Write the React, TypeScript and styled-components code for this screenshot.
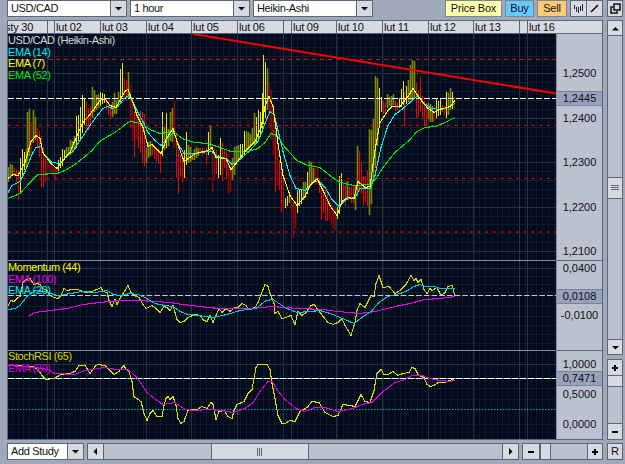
import React, { FunctionComponent } from 'react';
import styled, { createGlobalStyle } from 'styled-components';

const colors = {
  frame: '#a0a9ba',
  panel: '#bcc1cf',
  button: '#d8dae1',
  line: '#5d6678',
  yellow: '#ffff00',
  olive: '#858500',
  red: '#f00000',
  maroon: '#850808',
  cyan: '#00f0f0',
  magenta: '#f000f0',
  green: '#00e800',
};

const GlobalStyle = createGlobalStyle`
  body {
    margin: 0;
    background: ${colors.frame};
    font: 11px/15px 'Liberation Sans', Arial, sans-serif;
    color: #101014;
    overflow: hidden;
  }

  * {
    box-sizing: border-box;
  }
`;

const Window = styled.div`
  width: 625px;
  height: 464px;
  padding: 0 2px 3px 7px;
  display: grid;
  grid-template-columns: 596px 16px;
  grid-template-rows: 17px 420px 17px;
  column-gap: 4px;
  row-gap: 3px;
  background: ${colors.frame};
`;

const Toolbar = styled.div`
  display: flex;
  align-items: stretch;
`;

const Select = styled.div<{ width: number }>`
  width: ${({ width }) => width}px;
  height: 17px;
  margin-right: 3px;
  display: flex;
  border: 1px solid ${colors.line};
  background: #fff;
`;

const SelectLabel = styled.span`
  flex: 1;
  padding-left: 3px;
  letter-spacing: -0.35px;
  white-space: nowrap;
`;

const SelectArrow = styled.span`
  width: 16px;
  display: flex;
  align-items: center;
  justify-content: center;
  border-left: 1px solid ${colors.line};
  background: ${colors.button};
`;

const Spacer = styled.div`
  flex: 1;
`;

const Action = styled.button<{ tint: string; width: number }>`
  width: ${({ width }) => width}px;
  height: 17px;
  margin: 0 3px 0 0;
  padding: 0;
  border: 1px solid #7d8492;
  background: ${({ tint }) => tint};
  font: inherit;
  letter-spacing: -0.2px;
  color: inherit;
  white-space: nowrap;
`;

const IconCell = styled.div<{ width: number; joined?: boolean }>`
  width: ${({ width }) => width}px;
  height: 17px;
  display: flex;
  align-items: center;
  justify-content: center;
  border: 1px solid ${colors.line};
  border-left-width: ${({ joined }) => (joined ? 0 : 1)}px;
  background: ${colors.button};
`;

const ChartPanel = styled.div`
  border: 1px solid ${colors.line};
  display: grid;
  grid-template-columns: 548px 46px;
  grid-template-rows: 13px 405px;
`;

const TimeAxis = styled.div`
  display: flex;
  background: ${colors.button};
  border-bottom: 1px solid ${colors.line};
  overflow: hidden;
`;

const Day = styled.span<{ width: number }>`
  flex: none;
  width: ${({ width }) => width}px;
  padding-left: 1px;
  line-height: 13px;
  letter-spacing: -0.2px;
  white-space: nowrap;
  overflow: hidden;
  border-right: 1px solid ${colors.line};

  /* the oldest day is scrolled partly out of view */
  &:first-child {
    padding-left: 0;
    text-indent: -3px;
  }
`;

const AxisCorner = styled.div`
  border-bottom: 1px solid ${colors.line};
  background: ${colors.button};
`;

const Plot = styled.div`
  position: relative;
  background: #020b1c;
`;

const Legend = styled.div<{ top: number }>`
  position: absolute;
  left: 0;
  top: ${({ top }) => top}px;
  line-height: 11.5px;
  letter-spacing: -0.42px;
  white-space: nowrap;
`;

const LegendRow = styled.div<{ color: string }>`
  color: ${({ color }) => color};
`;

const PriceAxis = styled.div`
  display: grid;
  grid-template-rows: 227px 90px 88px;
  background: ${colors.panel};
`;

const AxisPane = styled.div`
  position: relative;
  overflow: hidden;
  border-left: 1px solid #8a92a4;
  border-bottom: 1px solid ${colors.line};

  &:last-child {
    border-bottom: 0;
  }
`;

const Tick = styled.span<{ top: number; current?: boolean }>`
  position: absolute;
  top: ${({ top }) => top}px;
  left: 0;
  width: 45px;
  height: 15px;
  line-height: 13px;
  text-align: center;
  background: ${({ current }) => (current ? '#97a2bd' : 'none')};
  border: solid #7a839a;
  border-width: ${({ current }) => (current ? '1px 0' : 0)};
`;

const SideBar = styled.div`
  display: flex;
  flex-direction: column;
  gap: 4px;
`;

const Track = styled.div<{ size: number; vertical?: boolean }>`
  flex: none;
  ${({ vertical }) => (vertical ? 'height' : 'width')}: ${({ size }) => size}px;
  display: flex;
  flex-direction: ${({ vertical }) => (vertical ? 'column' : 'row')};
  border: 1px solid ${colors.line};
  background: ${colors.panel};
`;

const Gap = styled.div<{ size: number }>`
  flex: 0 0 ${({ size }) => size}px;
`;

const Handle = styled.div<{ size: number; sides: string }>`
  flex: 0 0 ${({ size }) => size}px;
  display: flex;
  align-items: center;
  justify-content: center;
  background: ${colors.button};
  border: solid ${colors.line};
  border-width: ${({ sides }) => sides};
`;

const BottomBar = styled.div`
  display: flex;
`;

type Point = [number, number];
type Kind = 'Y' | 'y' | 'R' | 'r';

const kinds: Record<Kind, string> = {
  Y: '#e8e800',
  y: colors.olive,
  R: colors.red,
  r: colors.maroon,
};

const days: [string, number][] = [
  ['sty 30', 40], ['', 7], ['lut 02', 46], ['lut 03', 46], ['lut 04', 45], ['lut 05', 46],
  ['lut 06', 46], ['', 8], ['lut 09', 45], ['lut 10', 46], ['lut 11', 46], ['lut 12', 45],
  ['lut 13', 46], ['', 8], ['lut 16', 30],
];

// x, high, low, kind
const candles = `
8 167 182 y,10 164 178 y,12 165 176 y,14 168 176 R,16 169 182 R,18 171 199 R,20 158 194 Y,22 149 176 Y,24 152 170 Y,
26 149 167 y,27 112 161 y,29 109 156 y,31 122 153 r,33 110 143 y,35 117 140 y,37 128 148 R,39 131 157 R,41 136 187 R,
43 147 187 R,45 157 182 R,47 160 170 r,49 165 172 r,51 165 174 r,53 165 177 r,55 167 181 r,57 165 173 r,58 160 171 Y,
60 157 168 Y,62 149 166 Y,64 150 160 Y,66 147 158 y,68 147 156 y,70 140 155 y,72 141 153 y,74 136 150 y,76 116 148 Y,
78 115 141 Y,80 107 139 Y,82 95 133 Y,84 99 125 Y,86 102 132 R,88 108 131 R,90 106 125 R,92 87 118 y,94 90 112 y,
96 95 110 y,98 94 108 y,100 92 106 Y,102 93 104 Y,104 94 103 Y,106 99 110 R,108 102 115 R,110 106 119 R,112 102 117 y,
114 93 114 y,116 100 114 y,118 92 106 y,120 69 102 Y,122 63 97 Y,124 78 99 R,126 80 101 R,128 72 99 y,130 85 128 r,
132 100 141 r,134 112 157 R,136 109 140 r,138 112 148 R,140 111 153 R,142 112 163 R,144 114 166 R,146 148 163 y,
148 142 158 y,150 141 156 y,152 143 155 R,154 147 159 R,156 149 161 R,158 148 164 R,160 152 173 R,162 112 156 Y,
164 127 150 y,166 113 148 Y,168 129 146 y,170 112 141 y,172 108 142 y,174 101 148 r,176 135 178 R,178 150 194 R,
180 155 177 R,182 153 182 R,184 150 178 Y,186 132 165 Y,188 145 163 y,190 147 162 y,192 154 160 y,194 149 160 y,
196 147 158 y,198 148 156 y,200 148 154 R,202 147 156 R,204 150 154 R,206 147 165 R,208 132 155 Y,210 125 152 y,
212 146 192 r,214 147 180 r,216 150 174 R,218 155 179 Y,220 138 175 Y,222 143 181 R,224 150 168 R,226 151 179 R,
228 155 194 r,230 160 192 r,232 158 180 y,234 147 175 y,236 146 165 y,238 145 162 y,240 144 160 Y,242 144 158 Y,
244 131 156 Y,246 131 152 y,248 132 150 y,250 134 147 y,252 128 145 y,254 113 146 y,256 117 143 Y,258 110 140 Y,
260 112 134 Y,262 93 132 Y,263 55 124 Y,265 62 118 Y,267 68 110 y,269 83 128 r,271 90 140 r,273 104 155 r,275 120 192 R,
277 138 186 r,279 160 190 R,281 171 212 R,283 178 209 R,285 198 208 Y,287 196 206 Y,289 195 203 y,291 195 213 r,
293 199 238 r,295 201 229 r,297 190 213 Y,299 190 206 Y,301 189 204 Y,303 182 200 y,305 182 198 y,307 172 194 Y,
309 161 188 y,311 162 185 y,313 168 182 y,315 168 185 r,317 168 184 r,319 178 193 R,321 182 220 R,323 186 213 R,
325 190 221 R,327 194 221 R,329 198 220 r,331 204 224 r,333 206 229 r,335 208 230 r,337 207 219 Y,339 176 214 Y,
341 173 202 Y,343 184 201 R,345 185 206 R,347 181 200 y,349 187 199 R,351 187 203 R,353 185 203 R,355 185 210 y,
357 146 196 y,359 151 192 R,361 162 194 R,363 176 206 R,365 176 202 R,367 170 206 R,369 129 215 y,371 130 204 y,
373 119 178 y,375 76 168 y,377 78 146 y,379 88 124 Y,381 97 112 Y,383 101 114 R,385 102 113 R,387 94 108 y,389 97 106 y,
391 96 106 y,393 94 105 y,395 101 111 R,397 102 111 R,399 98 108 Y,401 89 107 Y,403 81 105 Y,404 92 126 R,406 86 104 Y,
408 80 102 y,410 65 100 y,412 60 98 y,414 61 98 y,416 83 118 R,418 90 117 R,420 77 111 R,422 96 119 R,424 101 126 R,
426 103 126 R,428 103 119 y,430 104 122 y,432 106 122 y,434 105 121 r,436 98 118 Y,438 101 116 Y,440 98 115 Y,
442 105 112 R,444 106 116 R,446 92 118 Y,448 93 115 y,450 88 110 y,452 92 109 Y,454 97 108 r`
  .split(',')
  .map(row => row.trim().split(' '));

const ema52: Point[] = [
  [8, 198], [20, 193], [30, 182], [38, 174], [57, 173], [65, 170], [75, 164], [85, 156], [92, 150], [100, 141],
  [106, 137], [115, 132], [124, 125], [130, 121], [137, 122], [144, 125], [152, 130], [160, 133], [173, 131],
  [184, 139], [195, 142], [208, 143], [220, 147], [231, 151], [248, 151], [258, 148], [265, 142], [271, 133],
  [277, 135], [285, 147], [297, 160], [308, 165], [320, 167], [330, 175], [338, 181], [348, 184], [355, 185],
  [370, 184], [376, 178], [383, 167], [395, 152], [410, 139], [417, 131], [425, 127], [435, 126], [443, 123], [455, 117],
];

const ema14: Point[] = [
  [8, 192], [12, 185], [20, 181], [25, 171], [32, 154], [36, 147], [41, 146], [44, 154], [52, 162], [60, 163],
  [67, 155], [73, 151], [78, 143], [86, 131], [95, 118], [103, 108], [107, 106], [113, 108], [118, 106], [124, 98],
  [129, 95], [133, 102], [138, 112], [143, 121], [148, 132], [155, 140], [161, 145], [168, 137], [174, 132],
  [178, 143], [184, 153], [195, 153], [208, 151], [212, 151], [217, 156], [226, 158], [232, 164], [240, 159],
  [250, 150], [258, 141], [265, 123], [270, 111], [274, 114], [278, 130], [284, 155], [290, 175], [296, 188],
  [305, 190], [312, 183], [318, 180], [325, 187], [332, 199], [339, 206], [346, 199], [355, 197], [360, 188],
  [370, 188], [375, 175], [381, 147], [388, 125], [395, 114], [403, 108], [411, 101], [418, 95], [424, 103],
  [432, 108], [441, 109], [450, 106], [455, 103],
];

const ema7: Point[] = [
  [8, 178], [13, 174], [18, 175], [25, 162], [31, 141], [36, 135], [40, 138], [43, 152], [50, 162], [57, 168],
  [63, 160], [70, 152], [77, 135], [83, 122], [90, 114], [95, 107], [100, 100], [105, 98], [110, 105], [116, 107],
  [121, 98], [125, 91], [128, 89], [133, 102], [137, 115], [143, 127], [148, 146], [152, 144], [156, 148],
  [161, 153], [167, 137], [173, 128], [178, 144], [184, 161], [190, 157], [195, 153], [208, 150], [212, 147],
  [216, 157], [226, 158], [231, 169], [236, 163], [245, 151], [255, 141], [261, 127], [265, 106], [269, 96],
  [273, 106], [278, 143], [283, 175], [290, 195], [297, 205], [305, 196], [310, 185], [317, 178], [323, 190],
  [330, 205], [337, 215], [342, 201], [348, 197], [354, 198], [358, 181], [365, 187], [370, 186], [375, 150],
  [380, 122], [388, 110], [392, 106], [400, 106], [408, 96], [413, 88], [417, 94], [422, 101], [428, 108],
  [434, 112], [440, 109], [450, 106], [455, 100],
];

const momentum: Point[] = [
  [8, 305], [11, 300], [14, 301], [17, 298], [20, 296], [23, 282], [26, 279], [30, 278], [34, 284], [37, 283],
  [40, 284], [43, 288], [47, 290], [50, 295], [54, 297], [58, 298], [61, 295], [64, 288], [67, 290], [72, 289],
  [78, 289], [85, 292], [92, 291], [97, 289], [101, 287], [103, 291], [107, 292], [109, 300], [112, 306],
  [115, 299], [117, 304], [121, 296], [125, 290], [128, 285], [131, 292], [134, 295], [139, 297], [143, 304],
  [146, 308], [152, 305], [156, 308], [160, 312], [164, 306], [167, 307], [170, 310], [173, 305], [177, 319],
  [180, 322], [184, 321], [188, 317], [195, 314], [200, 315], [204, 320], [207, 321], [210, 315], [213, 322],
  [216, 315], [219, 308], [222, 312], [226, 308], [230, 311], [235, 307], [238, 307], [242, 303], [246, 305],
  [249, 309], [255, 307], [258, 302], [261, 294], [265, 284], [268, 286], [270, 293], [274, 303], [275, 313],
  [278, 311], [282, 318], [286, 317], [291, 315], [295, 324], [298, 311], [302, 315], [306, 312], [311, 305],
  [314, 304], [318, 309], [323, 316], [328, 322], [333, 324], [338, 322], [342, 318], [345, 325], [348, 330],
  [351, 335], [355, 322], [357, 310], [360, 303], [365, 307], [368, 301], [371, 295], [374, 296], [376, 283],
  [379, 275], [383, 287], [389, 286], [395, 293], [400, 290], [406, 284], [411, 275], [414, 280], [416, 278],
  [418, 282], [421, 279], [424, 289], [427, 293], [430, 288], [432, 290], [437, 287], [439, 291], [441, 295],
  [445, 292], [448, 286], [452, 285], [455, 296],
];

const momentumEma20: Point[] = [
  [8, 309], [15, 308], [20, 305], [27, 296], [35, 290], [45, 291], [57, 295], [65, 294], [82, 291], [95, 292],
  [107, 290], [113, 294], [120, 295], [130, 293], [138, 294], [145, 297], [155, 303], [165, 305], [173, 306],
  [180, 311], [188, 314], [198, 315], [213, 317], [227, 314], [240, 310], [256, 308], [266, 300], [273, 299],
  [285, 307], [297, 312], [310, 311], [320, 310], [330, 313], [345, 319], [354, 323], [362, 317], [372, 310],
  [380, 301], [388, 296], [400, 293], [408, 290], [414, 286], [420, 284], [425, 286], [435, 286], [440, 288], [455, 288],
];

const momentumEma100: Point[] = [
  [28, 316], [35, 312], [50, 310], [67, 308], [83, 304], [100, 302], [120, 300], [140, 300], [155, 301],
  [170, 302], [183, 304], [208, 307], [220, 308], [250, 308], [272, 306], [298, 308], [322, 309], [338, 311],
  [360, 313], [375, 311], [395, 306], [410, 303], [425, 299], [440, 298], [455, 296],
];

const stoch: Point[] = [
  [8, 365], [33, 366], [38, 369], [42, 375], [46, 379], [54, 378], [61, 374], [70, 373], [75, 371], [79, 365],
  [85, 365], [90, 373], [95, 366], [98, 364], [105, 365], [110, 370], [114, 374], [119, 371], [122, 367],
  [124, 365], [126, 369], [129, 371], [132, 381], [134, 396], [138, 399], [141, 401], [144, 413], [147, 420],
  [150, 413], [153, 410], [157, 416], [162, 416], [164, 405], [166, 398], [168, 396], [170, 399], [173, 396],
  [176, 405], [178, 418], [181, 423], [184, 421], [188, 410], [191, 409], [197, 409], [202, 406], [207, 408],
  [211, 402], [213, 404], [216, 419], [219, 411], [224, 410], [228, 416], [232, 418], [234, 410], [237, 404],
  [244, 401], [248, 393], [252, 389], [254, 378], [256, 367], [258, 364], [267, 364], [270, 369], [272, 383],
  [275, 398], [278, 415], [282, 423], [285, 423], [290, 420], [295, 421], [300, 411], [307, 407], [312, 401],
  [319, 402], [325, 412], [333, 416], [338, 415], [343, 404], [350, 405], [355, 406], [361, 394], [365, 401],
  [370, 402], [374, 390], [377, 373], [381, 369], [384, 374], [388, 374], [393, 371], [398, 375], [403, 373],
  [409, 372], [412, 367], [415, 368], [418, 374], [421, 376], [424, 377], [427, 384], [430, 386], [434, 385],
  [438, 382], [445, 382], [450, 380], [455, 378],
];

const stochEma: Point[] = [
  [8, 365], [35, 367], [48, 369], [54, 373], [75, 374], [85, 370], [105, 367], [117, 369], [128, 369], [137, 377],
  [147, 392], [157, 400], [163, 404], [175, 402], [185, 409], [195, 410], [207, 409], [222, 410], [233, 412],
  [245, 408], [253, 402], [260, 391], [268, 381], [272, 381], [277, 389], [285, 399], [296, 408], [305, 411],
  [315, 407], [325, 407], [338, 411], [353, 408], [362, 404], [372, 402], [383, 391], [395, 382], [405, 379],
  [412, 375], [422, 375], [430, 378], [440, 380], [450, 381], [455, 380],
];

const dayLines = [47, 54, 100, 146, 191, 237, 283, 291, 336, 382, 428, 473, 519, 527];
const priceLines = [73, 118, 162, 207, 251, 268, 364];
const priceMinor = [38, 47, 56, 65, 82, 91, 100, 109, 127, 136, 145, 154, 171, 180, 189, 198, 216, 224, 233, 242];
const studyMinor = [276, 284, 292, 306, 316, 325, 334, 343, 388, 399, 424];
const minorHours = Array.from({ length: 96 }, (_, i) => 12 + Math.round(i * 5.7));

const HLines: FunctionComponent<{ at: number[]; color: string }> = ({ at, color }) => (
  <path d={at.map(y => `M8 ${y + 0.5}H556`).join('')} stroke={color} />
);

const VLines: FunctionComponent<{ at: number[]; color: string }> = ({ at, color }) => (
  <path d={at.map(x => `M${x + 0.5} 34V439`).join('')} stroke={color} />
);

const Curve: FunctionComponent<{ points: Point[]; color: string }> = ({ points, color }) => (
  <polyline
    points={points.map(([x, y]) => `${x},${y + 0.5}`).join(' ')}
    stroke={color}
    strokeWidth={1.1}
    fill="none"
    shapeRendering="crispEdges"
  />
);

const Chart: FunctionComponent = () => (
  <svg width="548" height="405" viewBox="8 34 548 405" display="block">
    <VLines at={minorHours} color="#0d1828" />
    <HLines at={[...priceMinor, ...studyMinor]} color="#101b2b" />
    <VLines at={dayLines} color="#263142" />
    <HLines at={priceLines} color="#263142" />
    {candles.map(([x, high, low, kind]) => (
      <path
        key={x}
        d={`M${Number(x) + 0.5} ${high}V${low}`}
        stroke={kinds[kind as Kind]}
        strokeWidth={kind === 'y' || kind === 'r' ? 1.6 : 1}
      />
    ))}
    <path d="M8 59.5H556" stroke="#c81820" strokeDasharray="4 4" />
    <path d="M8 125.5H556M8 178.5H556" stroke="#e80000" strokeDasharray="3 4.7" />
    <path d="M8 232H556" stroke="#a80808" strokeWidth="2" strokeDasharray="2.5 5.2" />
    <path d="M8 98.5H556" stroke="#fff" strokeDasharray="6 2" />
    <Curve points={ema52} color={colors.green} />
    <Curve points={ema14} color={colors.cyan} />
    <Curve points={ema7} color={colors.yellow} />
    <path d="M193 34L556 93.5" stroke="#f80000" strokeWidth="2" />

    <path d="M8 260.5H556M8 350.5H556" stroke="#8790a0" />
    <Curve points={momentum} color="#d8d800" />
    <path d="M8 295.5H556" stroke="#c8cbd8" strokeDasharray="5.7 2" />
    <Curve points={momentumEma100} color={colors.magenta} />
    <Curve points={momentumEma20} color="#00c8d0" />

    <path d="M8 378.5H556" stroke="#00b8b8" />
    <path d="M8 378.5H556" stroke="#fff" strokeDasharray="6 2" />
    <path d="M8 409.5H556" stroke="#00b0b0" strokeDasharray="1.5 1.5" />
    <Curve points={stoch} color="#e0e000" />
    <Curve points={stochEma} color="#d800d8" />
  </svg>
);

const arrows = { down: 'M0 2H7L3.5 5.5Z', up: 'M0 5.5H7L3.5 2Z', left: 'M5 0V7L1.5 3.5Z', right: 'M2 0V7L5.5 3.5Z' };

const Arrow: FunctionComponent<{ to: keyof typeof arrows }> = ({ to }) => (
  <svg width="7" height="7" viewBox="0 0 7 7">
    <path d={arrows[to]} fill="#000" />
  </svg>
);

const Sign: FunctionComponent<{ plus?: boolean }> = ({ plus }) => (
  <svg width="6" height="6" viewBox="0 0 6 6">
    <path d={plus ? 'M0 3H6M3 0V6' : 'M0 3H6'} stroke="#000" strokeWidth="2" />
  </svg>
);

const Grip: FunctionComponent<{ vertical?: boolean }> = ({ vertical }) => (
  <svg width="8" height="8" viewBox="0 0 8 8">
    <path d={vertical ? 'M0 1.5H8M0 3.5H8M0 5.5H8' : 'M1.5 0V8M3.5 0V8M5.5 0V8'} stroke={colors.line} />
  </svg>
);

const Dropdown: FunctionComponent<{ label: string; width: number }> = ({ label, width }) => (
  <Select width={width}>
    <SelectLabel>{label}</SelectLabel>
    <SelectArrow>
      <Arrow to="down" />
    </SelectArrow>
  </Select>
);

const App: FunctionComponent = () => (
  <>
    <GlobalStyle />
    <Window>
      <Toolbar>
        <Dropdown label="USD/CAD" width={120} />
        <Dropdown label="1 hour" width={120} />
        <Dropdown label="Heikin-Ashi" width={120} />
        <Spacer />
        <Action tint="#ffffae" width={57}>Price Box</Action>
        <Action tint="#66ccff" width={29}>Buy</Action>
        <Action tint="#ffcb77" width={30}>Sell</Action>
        <IconCell width={17}>
          <svg width="11" height="11" viewBox="0 0 11 11">
            <path d="M1.5 2V6M3.5 4V9M5.5 4V10M7.5 3V8M9.5 1V8" stroke="#222" />
          </svg>
        </IconCell>
        <IconCell width={16} joined>
          <svg width="9" height="9" viewBox="0 0 9 9">
            <path d="M1 8L8 1" stroke="#000" strokeWidth="1.5" />
          </svg>
        </IconCell>
      </Toolbar>
      <IconCell width={16}>
        <svg width="11" height="11" viewBox="0 0 11 11" fill="none" stroke="#111" strokeWidth="1.5">
          <path d="M4 1H10V7H4Z" />
          <path d="M3 4H1V10H7V8" />
        </svg>
      </IconCell>

      <ChartPanel>
        <TimeAxis>
          {days.map(([label, width], i) => (
            <Day key={i} width={width}>{label}</Day>
          ))}
        </TimeAxis>
        <AxisCorner />
        <Plot>
          <Chart />
          <Legend top={1}>
            <LegendRow color="#d8d8d8">USD/CAD (Heikin-Ashi)</LegendRow>
            <LegendRow color={colors.cyan}>EMA (14)</LegendRow>
            <LegendRow color={colors.yellow}>EMA (7)</LegendRow>
            <LegendRow color={colors.green}>EMA (52)</LegendRow>
          </Legend>
          <Legend top={228}>
            <LegendRow color={colors.yellow}>Momentum (44)</LegendRow>
            <LegendRow color={colors.magenta}>EMA (100)</LegendRow>
            <LegendRow color={colors.cyan}>EMA (20)</LegendRow>
          </Legend>
          <Legend top={317}>
            <LegendRow color="#d8d800">StochRSI (65)</LegendRow>
            <LegendRow color="#d800d8">EMA (20)</LegendRow>
          </Legend>
        </Plot>
        <PriceAxis>
          <AxisPane>
            <Tick top={33}>1,2500</Tick>
            <Tick top={57} current>1,2445</Tick>
            <Tick top={78}>1,2400</Tick>
            <Tick top={122}>1,2300</Tick>
            <Tick top={167}>1,2200</Tick>
            <Tick top={211}>1,2100</Tick>
          </AxisPane>
          <AxisPane>
            <Tick top={1}>0,0400</Tick>
            <Tick top={28} current>0,0108</Tick>
            <Tick top={48}>-0,0100</Tick>
          </AxisPane>
          <AxisPane>
            <Tick top={7}>1,0000</Tick>
            <Tick top={20} current>0,7471</Tick>
            <Tick top={37}>0,5000</Tick>
            <Tick top={67}>0,0000</Tick>
          </AxisPane>
        </PriceAxis>
      </ChartPanel>
      <SideBar>
        <Track size={335} vertical>
          <Handle size={15} sides="0 0 1px"><Arrow to="up" /></Handle>
          <Gap size={141} />
          <Handle size={22} sides="1px 0"><Grip vertical /></Handle>
          <Gap size={140} />
          <Handle size={15} sides="1px 0 0"><Arrow to="down" /></Handle>
        </Track>
        <Track size={81} vertical>
          <Handle size={16} sides="0 0 1px"><Sign plus /></Handle>
          <Handle size={11} sides="0 0 1px" />
          <Gap size={36} />
          <Handle size={16} sides="1px 0 0"><Sign /></Handle>
        </Track>
      </SideBar>

      <BottomBar>
        <Dropdown label="Add Study" width={77} />
        <Track size={432}>
          <Handle size={16} sides="0 1px 0 0"><Arrow to="left" /></Handle>
          <Gap size={107} />
          <Handle size={98} sides="0 1px"><Grip /></Handle>
          <Gap size={193} />
          <Handle size={16} sides="0 0 0 1px"><Arrow to="right" /></Handle>
        </Track>
        <Gap size={3} />
        <Track size={81}>
          <Handle size={17} sides="0 1px 0 0"><Sign /></Handle>
          <Handle size={11} sides="0 1px" />
          <Gap size={36} />
          <Handle size={15} sides="0 0 0 1px"><Sign plus /></Handle>
        </Track>
      </BottomBar>
      <IconCell width={16}>R</IconCell>
    </Window>
  </>
);

export default App;
